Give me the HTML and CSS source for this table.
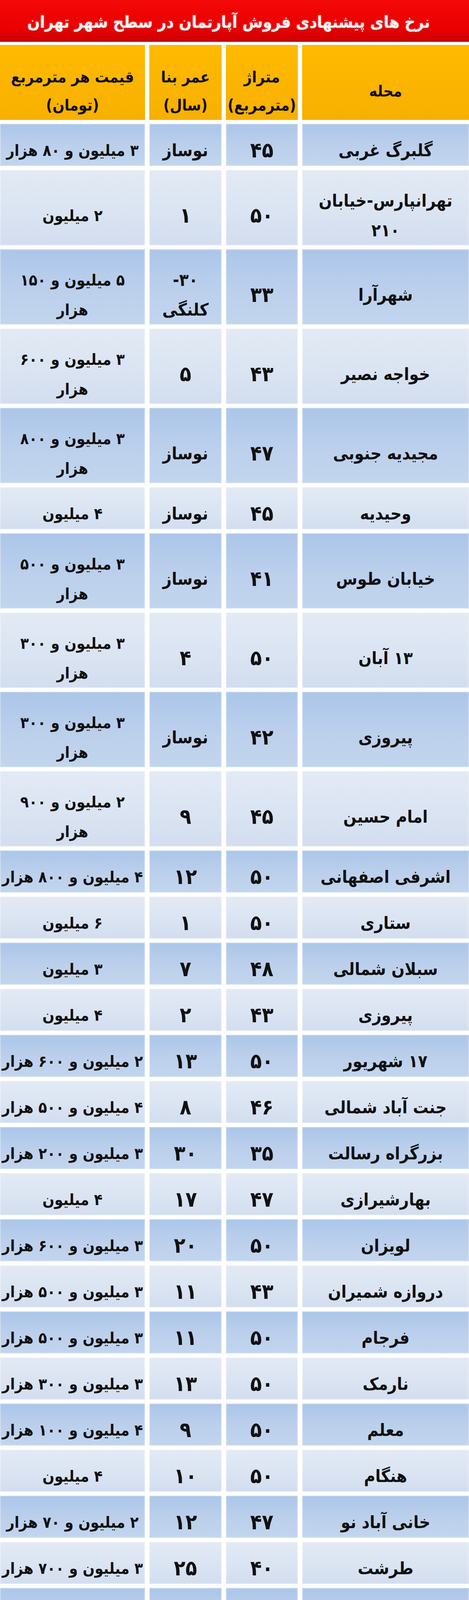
FILE: index.html
```html
<!DOCTYPE html>
<html lang="fa" dir="rtl">
<head>
<meta charset="utf-8">
<title>نرخ های پیشنهادی فروش آپارتمان در سطح شهر تهران</title>
<link rel="stylesheet" href="styles.css">
</head>
<body>
<div class="sheet">
  <div class="title">نرخ های پیشنهادی فروش آپارتمان در سطح شهر تهران</div>
  <div class="table">
    <div class="row head">
      <div class="cell">محله</div>
      <div class="cell two">متراژ<br>(مترمربع)</div>
      <div class="cell two">عمر بنا<br>(سال)</div>
      <div class="cell two">قیمت هر مترمربع<br>(تومان)</div>
    </div>

    <div class="row dark single"><div class="cell">گلبرگ غربی</div><div class="cell num">۴۵</div><div class="cell">نوساز</div><div class="cell price">۳ میلیون و ۸۰ هزار</div></div>
    <div class="row light double"><div class="cell">تهرانپارس-خیابان<br>۲۱۰</div><div class="cell num">۵۰</div><div class="cell num">۱</div><div class="cell price">۲ میلیون</div></div>
    <div class="row dark double"><div class="cell">شهرآرا</div><div class="cell num">۳۳</div><div class="cell">۳۰-<br>کلنگی</div><div class="cell price">۵ میلیون و ۱۵۰<br>هزار</div></div>
    <div class="row light double"><div class="cell">خواجه نصیر</div><div class="cell num">۴۳</div><div class="cell num">۵</div><div class="cell price">۳ میلیون و ۶۰۰<br>هزار</div></div>
    <div class="row dark double"><div class="cell">مجیدیه جنوبی</div><div class="cell num">۴۷</div><div class="cell">نوساز</div><div class="cell price">۳ میلیون و ۸۰۰<br>هزار</div></div>
    <div class="row light single"><div class="cell">وحیدیه</div><div class="cell num">۴۵</div><div class="cell">نوساز</div><div class="cell price">۴ میلیون</div></div>
    <div class="row dark double"><div class="cell">خیابان طوس</div><div class="cell num">۴۱</div><div class="cell">نوساز</div><div class="cell price">۳ میلیون و ۵۰۰<br>هزار</div></div>
    <div class="row light double"><div class="cell">۱۳ آبان</div><div class="cell num">۵۰</div><div class="cell num">۴</div><div class="cell price">۳ میلیون و ۳۰۰<br>هزار</div></div>
    <div class="row dark double"><div class="cell">پیروزی</div><div class="cell num">۴۲</div><div class="cell">نوساز</div><div class="cell price">۳ میلیون و ۳۰۰<br>هزار</div></div>
    <div class="row light double"><div class="cell">امام حسین</div><div class="cell num">۴۵</div><div class="cell num">۹</div><div class="cell price">۲ میلیون و ۹۰۰<br>هزار</div></div>
    <div class="row dark single"><div class="cell">اشرفی اصفهانی</div><div class="cell num">۵۰</div><div class="cell num">۱۲</div><div class="cell price">۴ میلیون و ۸۰۰ هزار</div></div>
    <div class="row light single"><div class="cell">ستاری</div><div class="cell num">۵۰</div><div class="cell num">۱</div><div class="cell price">۶ میلیون</div></div>
    <div class="row dark single"><div class="cell">سبلان شمالی</div><div class="cell num">۴۸</div><div class="cell num">۷</div><div class="cell price">۳ میلیون</div></div>
    <div class="row light single"><div class="cell">پیروزی</div><div class="cell num">۴۳</div><div class="cell num">۲</div><div class="cell price">۴ میلیون</div></div>
    <div class="row dark single"><div class="cell">۱۷ شهریور</div><div class="cell num">۵۰</div><div class="cell num">۱۳</div><div class="cell price">۲ میلیون و ۶۰۰ هزار</div></div>
    <div class="row light single"><div class="cell">جنت آباد شمالی</div><div class="cell num">۴۶</div><div class="cell num">۸</div><div class="cell price">۴ میلیون و ۵۰۰ هزار</div></div>
    <div class="row dark single"><div class="cell">بزرگراه رسالت</div><div class="cell num">۳۵</div><div class="cell num">۳۰</div><div class="cell price">۳ میلیون و ۲۰۰ هزار</div></div>
    <div class="row light single"><div class="cell">بهارشیرازی</div><div class="cell num">۴۷</div><div class="cell num">۱۷</div><div class="cell price">۴ میلیون</div></div>
    <div class="row dark single"><div class="cell">لویزان</div><div class="cell num">۵۰</div><div class="cell num">۲۰</div><div class="cell price">۳ میلیون و ۶۰۰ هزار</div></div>
    <div class="row light single"><div class="cell">دروازه شمیران</div><div class="cell num">۴۳</div><div class="cell num">۱۱</div><div class="cell price">۳ میلیون و ۵۰۰ هزار</div></div>
    <div class="row dark single"><div class="cell">فرجام</div><div class="cell num">۵۰</div><div class="cell num">۱۱</div><div class="cell price">۳ میلیون و ۵۰۰ هزار</div></div>
    <div class="row light single"><div class="cell">نارمک</div><div class="cell num">۵۰</div><div class="cell num">۱۳</div><div class="cell price">۳ میلیون و ۳۰۰ هزار</div></div>
    <div class="row dark single"><div class="cell">معلم</div><div class="cell num">۵۰</div><div class="cell num">۹</div><div class="cell price">۴ میلیون و ۱۰۰ هزار</div></div>
    <div class="row light single"><div class="cell">هنگام</div><div class="cell num">۵۰</div><div class="cell num">۱۰</div><div class="cell price">۴ میلیون</div></div>
    <div class="row dark single"><div class="cell">خانی آباد نو</div><div class="cell num">۴۷</div><div class="cell num">۱۲</div><div class="cell price">۲ میلیون و ۷۰ هزار</div></div>
    <div class="row light single"><div class="cell">طرشت</div><div class="cell num">۴۰</div><div class="cell num">۲۵</div><div class="cell price">۳ میلیون و ۷۰۰ هزار</div></div>
    <div class="row dark single"><div class="cell">پیروزی</div><div class="cell num">۲۴</div><div class="cell num">۱۵</div><div class="cell price">۳ میلیون</div></div>
    <div class="row light single"><div class="cell">محلاتی</div><div class="cell num">۴۵</div><div class="cell">نوساز</div><div class="cell price">۳ میلیون و ۱۰۰ هزار</div></div>
    <div class="row dark single"><div class="cell">ده ونک</div><div class="cell num">۵۰</div><div class="cell num">۱۳</div><div class="cell price">۴ میلیون و ۵۰۰ هزار</div></div>
    <div class="row light single"><div class="cell">کوهسار</div><div class="cell num">۵۰</div><div class="cell">نوساز</div><div class="cell price">۵ میلیون</div></div>
    <div class="row dark single"><div class="cell">شریعتی</div><div class="cell num">۴۷</div><div class="cell num">۱۵</div><div class="cell price">۳ میلیون و ۶۸۰ هزار</div></div>
  </div>
</div>
</body>
</html>
```

FILE: styles.css
```css
html, body {
  margin: 0;
  padding: 0;
  background: #ffffff;
}

.sheet {
  width: 1200px;
  direction: rtl;
  font-family: "DejaVu Sans Condensed", "DejaVu Sans", sans-serif;
  font-stretch: condensed;
  font-weight: bold;
  color: #111111;
}

.title {
  height: 107px;
  box-sizing: border-box;
  display: flex;
  align-items: center;
  justify-content: center;
  padding-top: 8px;
  padding-right: 30px;
  background: linear-gradient(#f40808, #ea0000 70%, #d00000);
  border-bottom: 3px solid #a80000;
  color: #fff4f4;
  font-size: 42px;
  text-shadow: 0 0 4px #ff8f8f, 1px 2px 2px #8a0000;
  white-space: nowrap;
}

.table {
  display: flex;
  flex-direction: column;
  gap: 10px;
  margin-top: 8px;
}

.row {
  display: grid;
  grid-template-columns: 427px 184px 185px 371px;
  grid-template-rows: 100%;
  column-gap: 11px;
  overflow: hidden;
}

.cell {
  display: flex;
  align-items: center;
  justify-content: center;
  box-sizing: border-box;
  min-height: 0;
  text-align: center;
  font-size: 44px;
  line-height: 76px;
  white-space: nowrap;
  box-shadow: inset 0 0 0 2px rgba(255, 255, 255, 0.35);
}

.cell.num {
  font-size: 54px;
}

.cell.price {
  font-size: 40px;
}

.row.single { height: 108px; }
.row.double { height: 193px; }

.row.single .cell { padding-top: 28px; }
.row.double .cell { padding-top: 40px; }

.row.head { height: 192px; }
.row.head .cell {
  background: linear-gradient(#ffba00, #f7b000);
  font-size: 40px;
  line-height: 72px;
  box-shadow: none;
  padding-top: 44px;
}

.row.dark .cell {
  background: linear-gradient(#abc6e9, #bcd0ec 55%, #c2d5ee);
}

.row.light .cell {
  background: linear-gradient(#e3eaf5, #dae4f2 55%, #d2ddef);
}
```
